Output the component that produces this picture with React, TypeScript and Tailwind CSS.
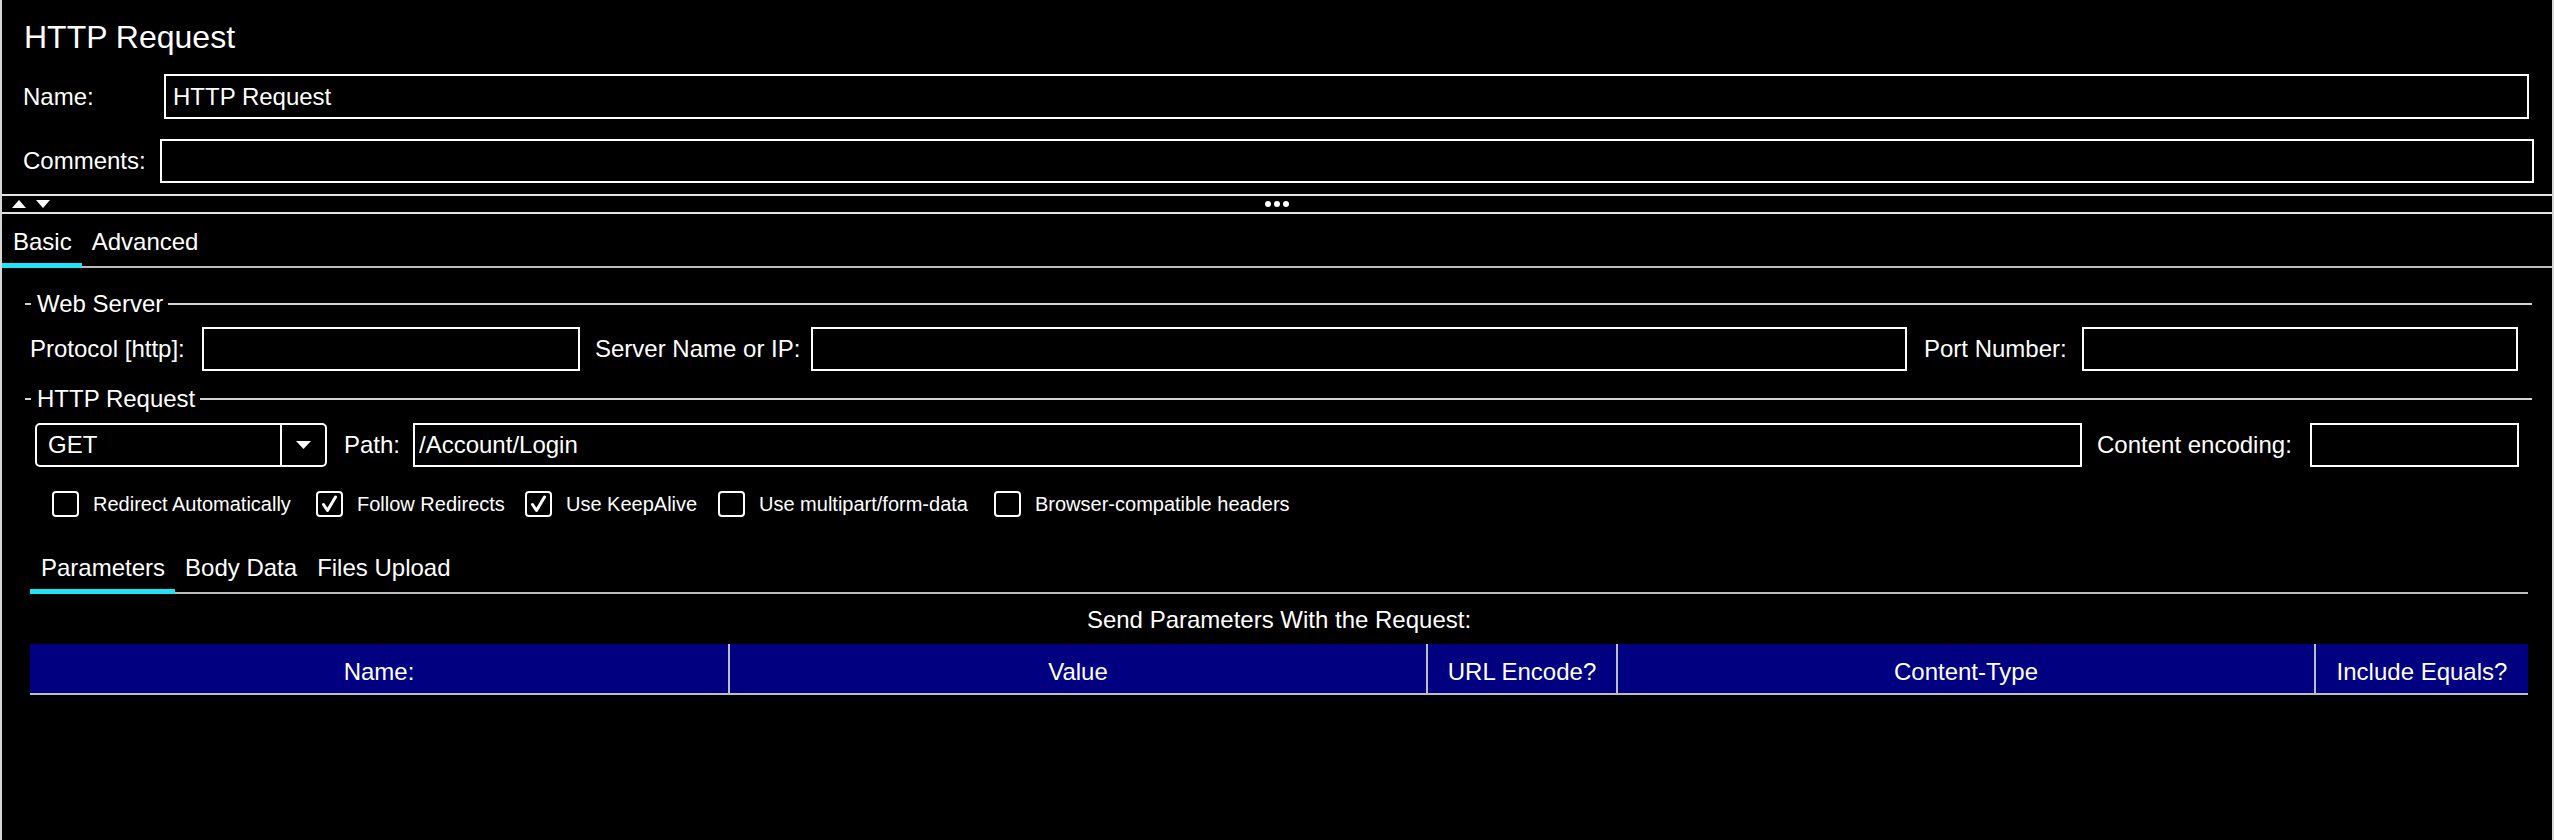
import React from 'react';

type TabProps = { label: string; active?: boolean; className?: string };

function Tab({ label, active, className }: TabProps) {
  return (
    <div className={`relative h-full pt-[14px] text-[24px] leading-[28px] ${className ?? ''}`}>
      {label}
      {active && <div className="absolute left-0 right-0 -bottom-[2px] h-[5px] bg-[#1fe4f6]" />}
    </div>
  );
}

function Legend({ title }: { title: string }) {
  return (
    <div className="flex h-[28px] items-center pl-[23px] pr-[20px]">
      <div className="h-[2px] w-[6px] bg-[#d4d4d4]" />
      <span className="pl-[6px] pr-[5px] text-[24px] leading-[28px]">{title}</span>
      <div className="h-[2px] flex-1 bg-[#d4d4d4]" />
    </div>
  );
}

function Field({ value, className }: { value?: string; className?: string }) {
  return (
    <div className={`flex h-[44px] items-center border-2 border-white text-[24px] ${className ?? ''}`}>
      {value}
    </div>
  );
}

function Checkbox({ label, checked, className }: { label: string; checked?: boolean; className?: string }) {
  return (
    <div className={`flex items-center ${className ?? ''}`}>
      <div className="flex h-[26px] w-[27px] shrink-0 items-center justify-center rounded-[4px] border-2 border-white">
        {checked && (
          <svg width="17" height="18" viewBox="0 0 17 18" fill="none">
            <path d="M2.5 9.5 L6.5 15.5 L14.5 2" stroke="white" strokeWidth="3" strokeLinecap="round" strokeLinejoin="round" />
          </svg>
        )}
      </div>
      <span className="ml-[14px] whitespace-nowrap text-[20px]">{label}</span>
    </div>
  );
}

const columns = [
  { label: 'Name:', border: false },
  { label: 'Value', border: true },
  { label: 'URL Encode?', border: true },
  { label: 'Content-Type', border: true },
  { label: 'Include Equals?', border: true },
];

export default function App() {
  return (
    <div className="h-[840px] w-full overflow-hidden border-x-2 border-[#d6d6d6] bg-black font-['Liberation_Sans',Arial,sans-serif] text-white">
      {/* title */}
      <div className="pl-[22px] pt-[19px] text-[32px] leading-[36px]">HTTP Request</div>

      <div className="mt-[19px] flex h-[45px] items-center pl-[21px] pr-[23px]">
        <span className="w-[141px] shrink-0 text-[24px]">Name:</span>
        <Field value="HTTP Request" className="h-[45px] flex-1 pl-[7px]" />
      </div>

      <div className="mt-[20px] flex h-[44px] items-center pl-[21px] pr-[18px]">
        <span className="w-[137px] shrink-0 text-[24px]">Comments:</span>
        <Field className="flex-1" />
      </div>

      {/* split divider */}
      <div className="mt-[11px] grid h-[20px] grid-cols-[1fr_auto_1fr] items-center border-y-2 border-[#e2e2e2]">
        <div className="flex items-center gap-[10px] pl-[10px]">
          <svg width="14" height="8" viewBox="0 0 14 8">
            <path d="M0 8 L7 0 L14 8 Z" fill="white" />
          </svg>
          <svg width="14" height="8" viewBox="0 0 14 8">
            <path d="M0 0 L14 0 L7 8 Z" fill="white" />
          </svg>
        </div>
        <div className="flex gap-[3px]">
          <div className="h-[6px] w-[6px] rounded-full bg-white" />
          <div className="h-[6px] w-[6px] rounded-full bg-white" />
          <div className="h-[6px] w-[6px] rounded-full bg-white" />
        </div>
        <div />
      </div>

      {/* main tabs */}
      <div className="flex h-[54px] border-b-2 border-[#bdbdbd]">
        <Tab label="Basic" active className="pl-[11px] pr-[10px]" />
        <Tab label="Advanced" className="pl-[10px]" />
      </div>

      <div className="mt-[22px]">
        <Legend title="Web Server" />
      </div>

      <div className="mt-[9px] flex h-[44px] items-center pl-[28px] text-[24px]">
        <span className="w-[172px] shrink-0">Protocol [http]:</span>
        <Field className="w-[378px]" />
        <span className="ml-[15px] w-[216px] shrink-0">Server Name or IP:</span>
        <Field className="w-[1096px]" />
        <span className="ml-[17px] w-[158px] shrink-0">Port Number:</span>
        <Field className="w-[436px]" />
      </div>

      <div className="mt-[14px]">
        <Legend title="HTTP Request" />
      </div>

      <div className="mt-[10px] flex h-[44px] items-center pl-[33px] text-[24px]">
        <div className="flex h-[44px] w-[292px] items-center rounded-[5px] border-2 border-white">
          <span className="flex-1 pl-[11px]">GET</span>
          <div className="flex h-full w-[45px] items-center justify-center border-l-2 border-white">
            <svg width="15" height="8" viewBox="0 0 15 8">
              <path d="M0 0 L15 0 L7.5 8 Z" fill="white" />
            </svg>
          </div>
        </div>
        <span className="ml-[17px] w-[69px] shrink-0">Path:</span>
        <Field value="/Account/Login" className="w-[1669px] pl-[4px]" />
        <span className="ml-[15px] w-[213px] shrink-0">Content encoding:</span>
        <Field className="w-[209px]" />
      </div>

      <div className="mt-[24px] flex h-[26px] items-center pl-[50px]">
        <Checkbox label="Redirect Automatically" className="w-[264px]" />
        <Checkbox label="Follow Redirects" checked className="w-[209px]" />
        <Checkbox label="Use KeepAlive" checked className="w-[193px]" />
        <Checkbox label="Use multipart/form-data" className="w-[276px]" />
        <Checkbox label="Browser-compatible headers" />
      </div>

      {/* sub tabs */}
      <div className="ml-[28px] mr-[24px] mt-[23px] flex h-[54px] border-b-2 border-[#bdbdbd]">
        <Tab label="Parameters" active className="pl-[11px] pr-[10px]" />
        <Tab label="Body Data" className="pl-[10px] pr-[10px]" />
        <Tab label="Files Upload" className="pl-[10px]" />
      </div>

      <div className="ml-[28px] mr-[24px] mt-[12px] text-center text-[24px] leading-[28px]">
        Send Parameters With the Request:
      </div>

      <div className="ml-[28px] mr-[24px] mt-[10px] grid h-[51px] grid-cols-[698px_698px_190px_698px_214px] border-b-2 border-[#bdbdbd] bg-[#000080]">
        {columns.map((c) => (
          <div
            key={c.label}
            className={`flex items-center justify-center pt-[6px] text-[24px] ${c.border ? 'border-l-2 border-[#bdbdbd]' : ''}`}
          >
            {c.label}
          </div>
        ))}
      </div>
    </div>
  );
}
